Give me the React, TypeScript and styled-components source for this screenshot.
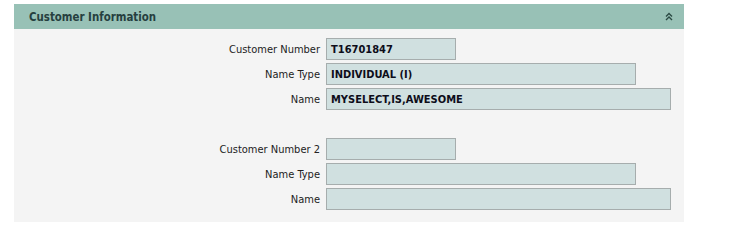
import React from 'react'
import styled, { createGlobalStyle } from 'styled-components'

const GlobalStyle = createGlobalStyle`
  body {
    margin: 0;
    padding: 4px 0 0 14px;
    background: #ffffff;
    font-family: 'DejaVu Sans Condensed', 'DejaVu Sans', sans-serif;
    font-stretch: condensed;
  }
`

const Panel = styled.section`
  width: 670px;
  background: #f4f4f4;
`

const Header = styled.div`
  height: 25px;
  display: flex;
  align-items: center;
  justify-content: space-between;
  padding: 0 11px 0 15px;
  box-sizing: border-box;
  background: #98c1b6;
`

const Title = styled.h2`
  margin: 0;
  font-size: 11.4px;
  font-weight: bold;
  color: #263f3f;
`

const CollapseButton = styled.button`
  border: none;
  background: none;
  padding: 0;
  width: 8px;
  height: 9px;
  display: flex;
  cursor: pointer;
`

const Body = styled.div`
  display: grid;
  grid-template-columns: 306px 1fr;
  column-gap: 6px;
  row-gap: 3px;
  padding: 9px 0 12px;
`

const Label = styled.label`
  height: 22px;
  display: flex;
  align-items: center;
  justify-content: flex-end;
  font-size: 11px;
  color: #222222;
`

const Field = styled.div<{ $width: number }>`
  width: ${(p) => p.$width}px;
  height: 22px;
  box-sizing: border-box;
  border: 1px solid #a6adad;
  background: #d0e0e0;
  display: flex;
  align-items: center;
  padding-left: 4px;
  font-size: 11px;
  font-weight: bold;
  color: #0d0d1a;
`

const Spacer = styled.div`
  grid-column: 1 / -1;
  height: 22px;
`

const DoubleChevronUp = () => (
  <svg width="8" height="9" viewBox="0 0 8 9" fill="none" stroke="#2b4a44" strokeWidth="1.4">
    <path d="M1 4.5 L4 1.5 L7 4.5" />
    <path d="M1 8 L4 5 L7 8" />
  </svg>
)

interface Row {
  label: string
  value: string
  width: number
}

const groups: Row[][] = [
  [
    { label: 'Customer Number', value: 'T16701847', width: 130 },
    { label: 'Name Type', value: 'INDIVIDUAL (I)', width: 310 },
    { label: 'Name', value: 'MYSELECT,IS,AWESOME', width: 345 },
  ],
  [
    { label: 'Customer Number 2', value: '', width: 130 },
    { label: 'Name Type', value: '', width: 310 },
    { label: 'Name', value: '', width: 345 },
  ],
]

const App = () => {
  return (
    <>
      <GlobalStyle />
      <Panel>
        <Header>
          <Title>Customer Information</Title>
          <CollapseButton aria-label="Collapse">
            <DoubleChevronUp />
          </CollapseButton>
        </Header>
        <Body>
          {groups.map((rows, g) => (
            <React.Fragment key={g}>
              {g > 0 && <Spacer />}
              {rows.map((row) => (
                <React.Fragment key={`${g}-${row.label}`}>
                  <Label>{row.label}</Label>
                  <Field $width={row.width}>{row.value}</Field>
                </React.Fragment>
              ))}
            </React.Fragment>
          ))}
        </Body>
      </Panel>
    </>
  )
}

export default App
